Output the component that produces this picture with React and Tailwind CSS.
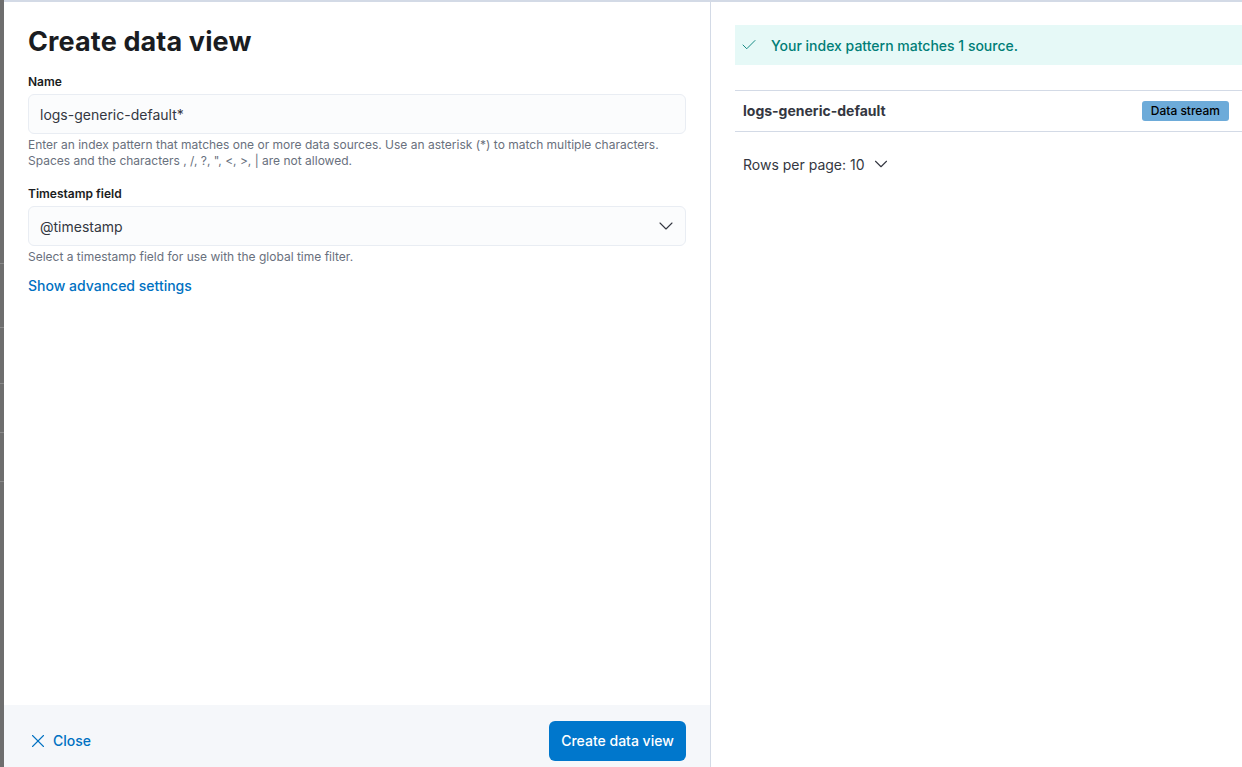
import React from 'react';
import { X, ChevronDown, Check } from 'lucide-react';

const FieldLabel = ({ children }) => (
    <div className="text-[12px] leading-[16px] font-semibold text-[#1a1c21]">{children}</div>
);

const HelpText = ({ children }) => (
    <div className="text-[12px] leading-[16px] text-[#69707d]">{children}</div>
);

const BackdropStrip = () => (
    <div className="flex w-[4px] shrink-0 flex-col bg-[#6e6e6e]">
        <div className="h-[263px]" />
        <div className="h-px bg-[#8a8a8a]" />
        <div className="h-[63px]" />
        <div className="h-px bg-[#8a8a8a]" />
        <div className="h-[55px]" />
        <div className="h-px bg-[#8a8a8a]" />
        <div className="h-[48px]" />
        <div className="h-px bg-[#8a8a8a]" />
        <div className="h-[48px]" />
        <div className="h-px bg-[#8a8a8a]" />
    </div>
);

const App = () => {
    return (
        <div className="flex h-[767px] w-[1242px] overflow-hidden bg-white font-['Inter',sans-serif] text-[#343741]">
            <BackdropStrip />
            <div className="flex min-w-0 flex-1 flex-col">
                <div className="h-[2px] shrink-0 bg-[#d3dae6]" />
                <div className="flex min-h-0 flex-1">
                    {/* left: form */}
                    <div className="flex w-[707px] shrink-0 flex-col border-r border-[#d3dae6]">
                        <div className="flex-1 px-[24px] pt-[22px]">
                            <h1 className="text-[27px] leading-[36px] font-bold tracking-[0.005em] text-[#1a1c21]">
                                Create data view
                            </h1>

                            <div className="mt-[14px]">
                                <FieldLabel>Name</FieldLabel>
                                <div className="mt-[4px] flex h-[40px] items-center rounded-[6px] border border-[#e9edf3] bg-[#fbfcfd] px-[11px] text-[14px] text-[#343741]">
                                    logs-generic-default*
                                </div>
                                <div className="mt-[3px]">
                                    <HelpText>
                                        Enter an index pattern that matches one or more data sources. Use an asterisk (*) to match multiple characters.
                                        <br />
                                        Spaces and the characters , /, ?, ", &lt;, &gt;, | are not allowed.
                                    </HelpText>
                                </div>
                            </div>

                            <div className="mt-[17px]">
                                <FieldLabel>Timestamp field</FieldLabel>
                                <div className="mt-[4px] flex h-[40px] items-center justify-between rounded-[6px] border border-[#e9edf3] bg-[#fbfcfd] pl-[11px] pr-[7px] text-[14px] text-[#343741]">
                                    <span>@timestamp</span>
                                    <ChevronDown className="h-[24px] w-[24px] text-[#343741]" strokeWidth={1.1} />
                                </div>
                                <div className="mt-[3px]">
                                    <HelpText>Select a timestamp field for use with the global time filter.</HelpText>
                                </div>
                            </div>

                            <button className="mt-[11px] block text-[14px] leading-[20px] font-medium text-[#0071c2]">
                                Show advanced settings
                            </button>
                        </div>

                        <div className="flex h-[62px] shrink-0 items-start justify-between bg-[#f5f7fa] pl-[23px] pr-[24px] pt-[16px]">
                            <button className="flex h-[40px] items-center gap-[4px] pb-[1px] text-[14px] font-medium text-[#0071c2]">
                                <X className="h-[22px] w-[22px]" strokeWidth={1.2} />
                                Close
                            </button>
                            <button className="flex h-[40px] w-[137px] items-center justify-center rounded-[6px] bg-[#0077cc] pb-[1px] text-[14px] font-medium text-white">
                                Create data view
                            </button>
                        </div>
                    </div>

                    {/* right: matching sources */}
                    <div className="min-w-0 flex-1 overflow-hidden pl-[24px] pt-[23px]">
                        <div className="w-[510px]">
                            <div className="flex h-[40px] items-center gap-[13px] bg-[#e6f9f7] pl-[5px] text-[14px] font-medium text-[#007e77]">
                                <Check className="h-[18px] w-[18px]" strokeWidth={1.2} />
                                Your index pattern matches 1 source.
                            </div>

                            <div className="mt-[25px] flex h-[42px] items-center justify-between border-y border-[#d3dae6] pl-[8px] pr-[16px]">
                                <span className="-mt-[1px] text-[14px] font-bold text-[#343741]">logs-generic-default</span>
                                <span className="flex h-[20px] items-center rounded-[3px] bg-[#6dabd9] px-[9px] text-[12px] font-medium text-black">
                                    Data stream
                                </span>
                            </div>

                            <div className="mt-[21px] flex items-center gap-[5px] pl-[8px] text-[14px] text-[#343741]">
                                Rows per page: 10
                                <ChevronDown className="h-[22px] w-[22px]" strokeWidth={1.2} />
                            </div>
                        </div>
                    </div>
                </div>
            </div>
        </div>
    );
};

export default App;
